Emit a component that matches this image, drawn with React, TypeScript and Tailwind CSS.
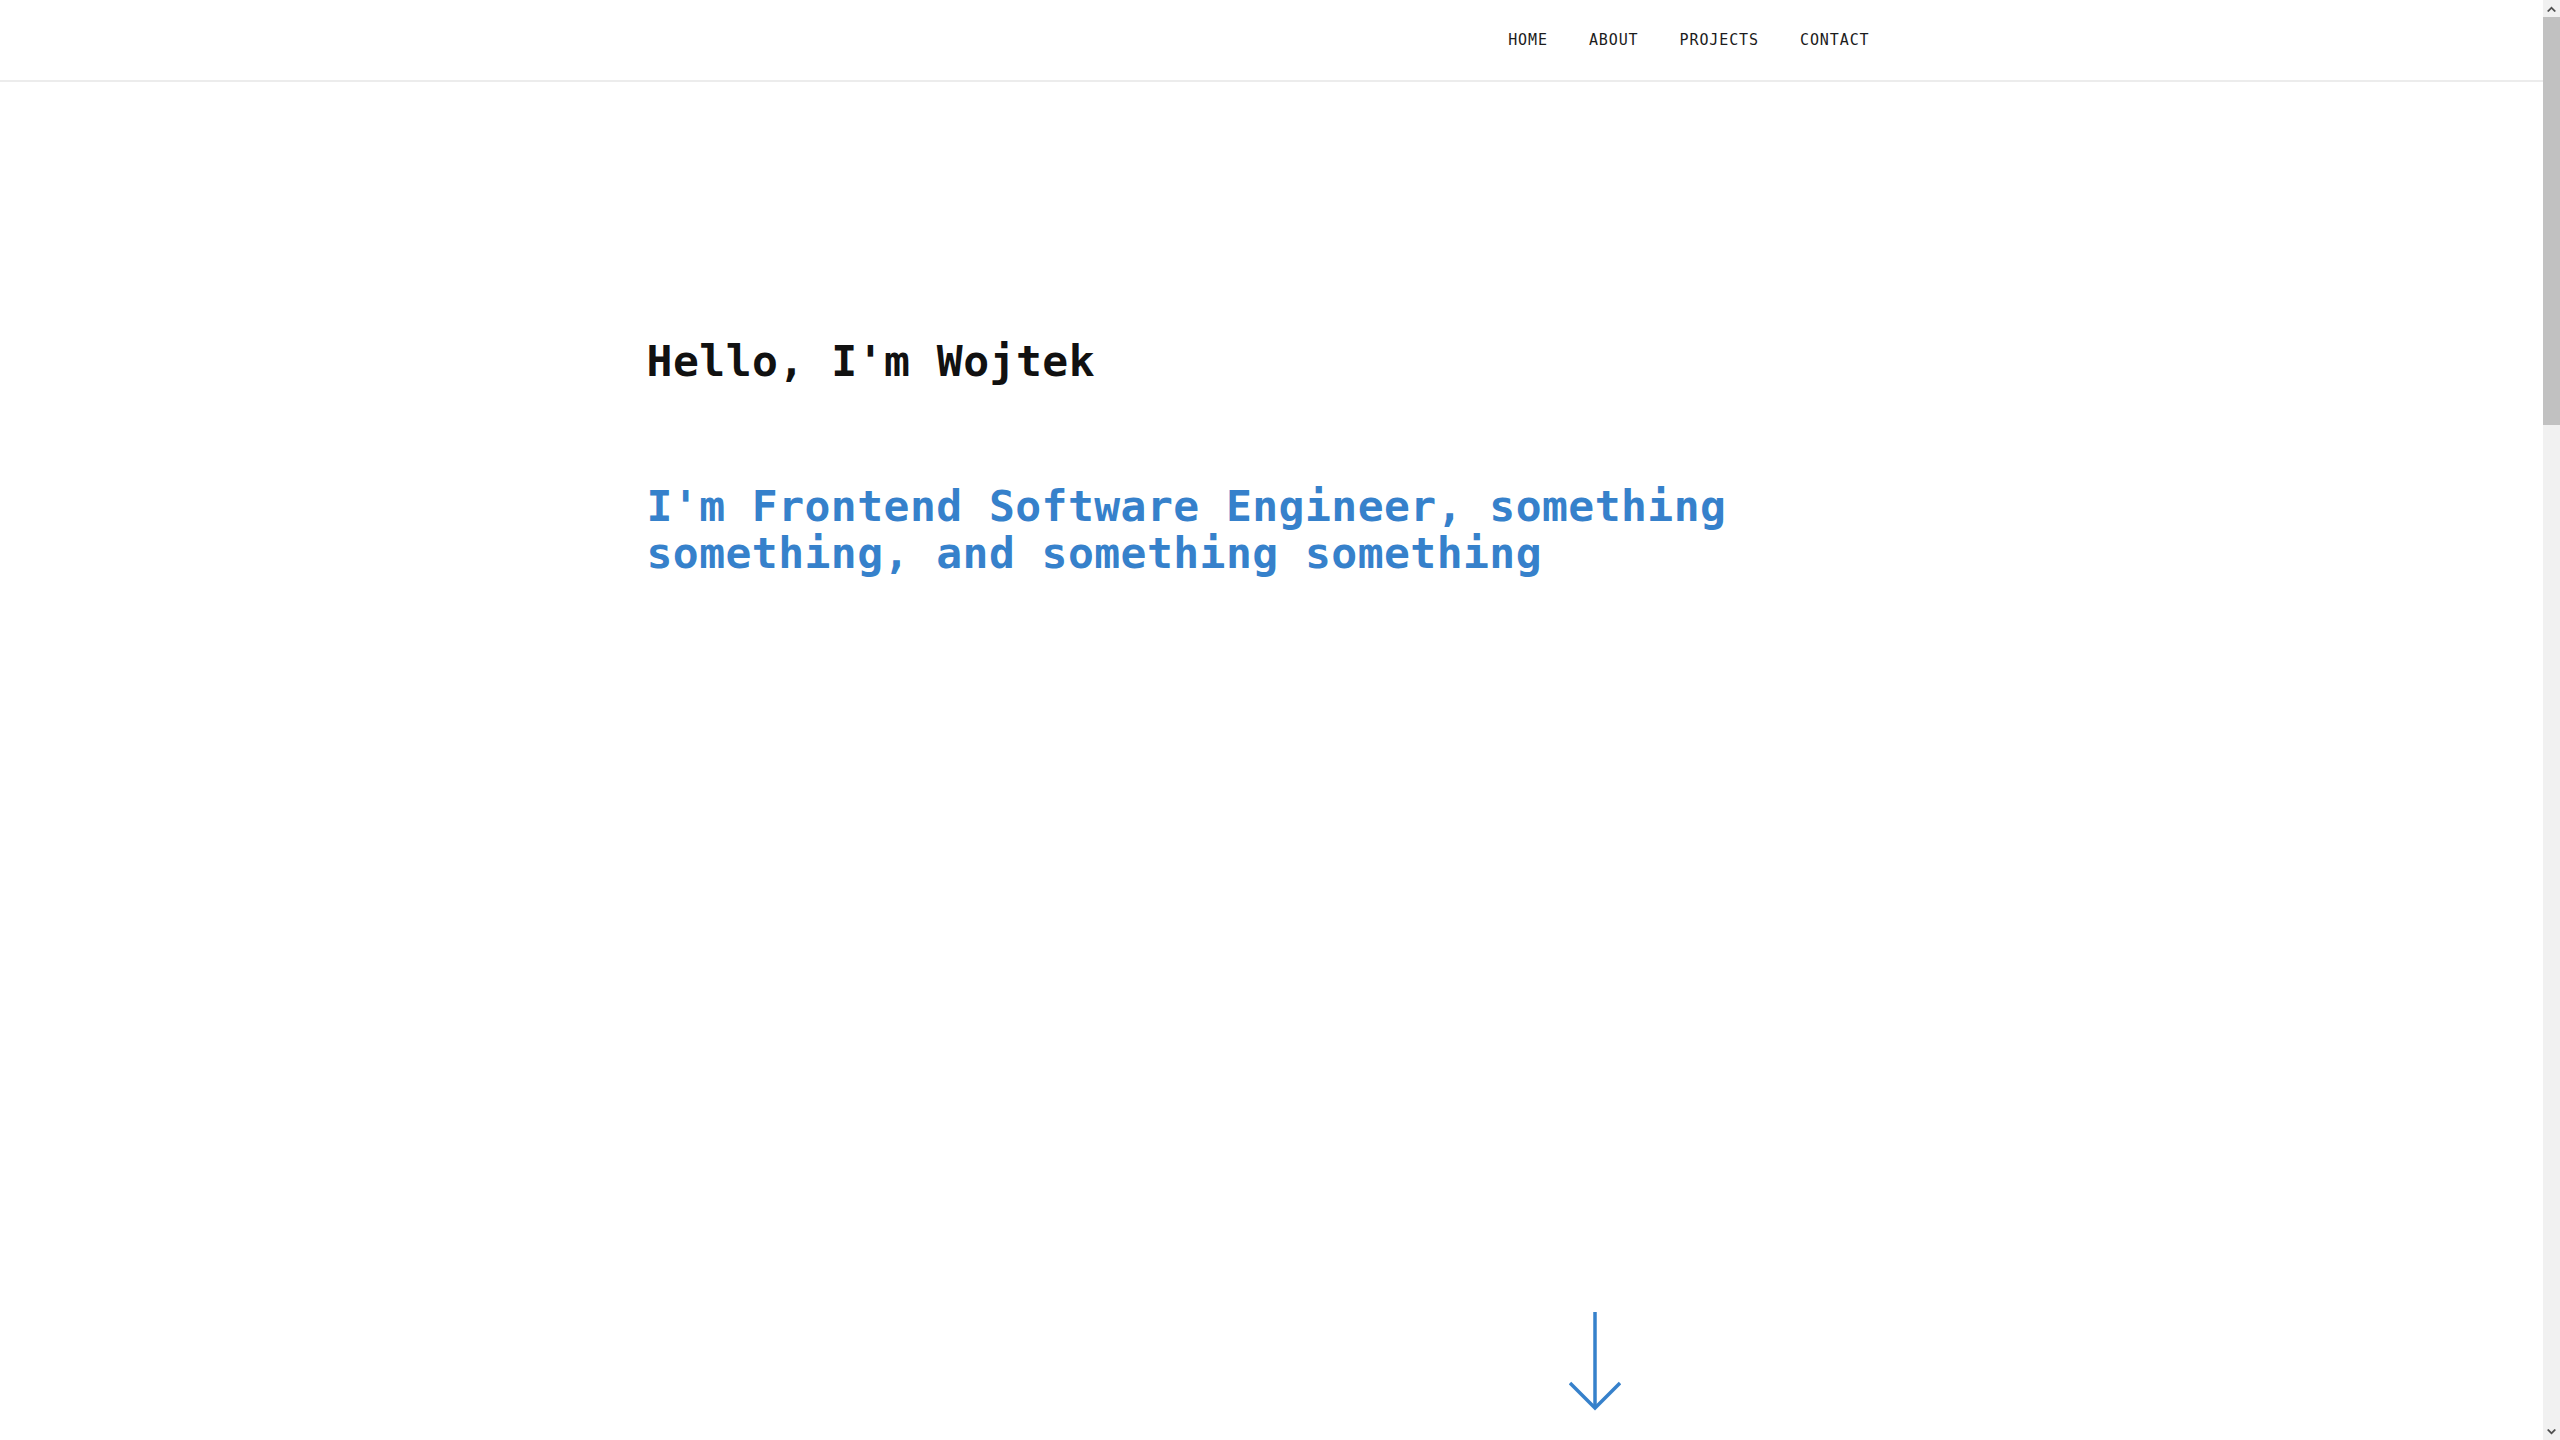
import React from "react";

function FakeScrollbar() {
  return (
    <div className="w-[17px] h-[1440px] bg-[#f1f1f1] flex flex-col shrink-0">
      <div className="h-[17px] flex items-center justify-center">
        <svg width="9" height="6" viewBox="0 0 9 6">
          <polygon points="0,5 4.5,0.5 9,5 7.5,6 4.5,3 1.5,6" fill="#505050" />
        </svg>
      </div>
      <div className="flex-1 flex flex-col">
        <div className="h-[408px] bg-[#c1c1c1]" />
      </div>
      <div className="h-[17px] flex items-center justify-center">
        <svg width="9" height="6" viewBox="0 0 9 6">
          <polygon points="0,1 4.5,5.5 9,1 7.5,0 4.5,3 1.5,0" fill="#505050" />
        </svg>
      </div>
    </div>
  );
}

export default function App() {
  const mono = { fontFamily: '"DejaVu Sans Mono", "Liberation Mono", monospace' };
  return (
    <div className="flex w-full h-[1440px] overflow-hidden bg-white" style={mono}>
      <div className="flex-1 min-w-0">
        <header className="h-[82px] border-b-2 border-[#ececec] bg-white">
          <div className="mx-auto max-w-[1250px] h-[80px] flex items-center justify-end pr-[27px]">
            <nav>
              <ul className="flex items-center gap-[41px] text-[15px] tracking-[0.9px] text-[#1c1c1c]">
                <li>HOME</li>
                <li>ABOUT</li>
                <li>PROJECTS</li>
                <li>CONTACT</li>
              </ul>
            </nav>
          </div>
        </header>
        <main>
          <section className="mx-auto max-w-[1250px] h-[1358px] flex flex-col">
            <h1 className="mt-[254px] text-[43px] leading-[50px] font-bold text-[#111111] tracking-[0.5px]">
              Hello, I'm Wojtek
            </h1>
            <h2 className="mt-[97px] text-[43px] leading-[47px] font-bold text-[#3681cb] tracking-[0.45px]">
              I'm Frontend Software Engineer, something something, and something something
            </h2>
            <div className="mt-auto mb-[28px] flex pl-[922px]">
              <svg width="52" height="100" viewBox="0 0 52 100" fill="none" stroke="#3681cb" strokeWidth="3.5">
                <line x1="26" y1="0" x2="26" y2="96" />
                <polyline points="1,71 26,96 51,71" />
              </svg>
            </div>
          </section>
        </main>
      </div>
      <FakeScrollbar />
    </div>
  );
}
